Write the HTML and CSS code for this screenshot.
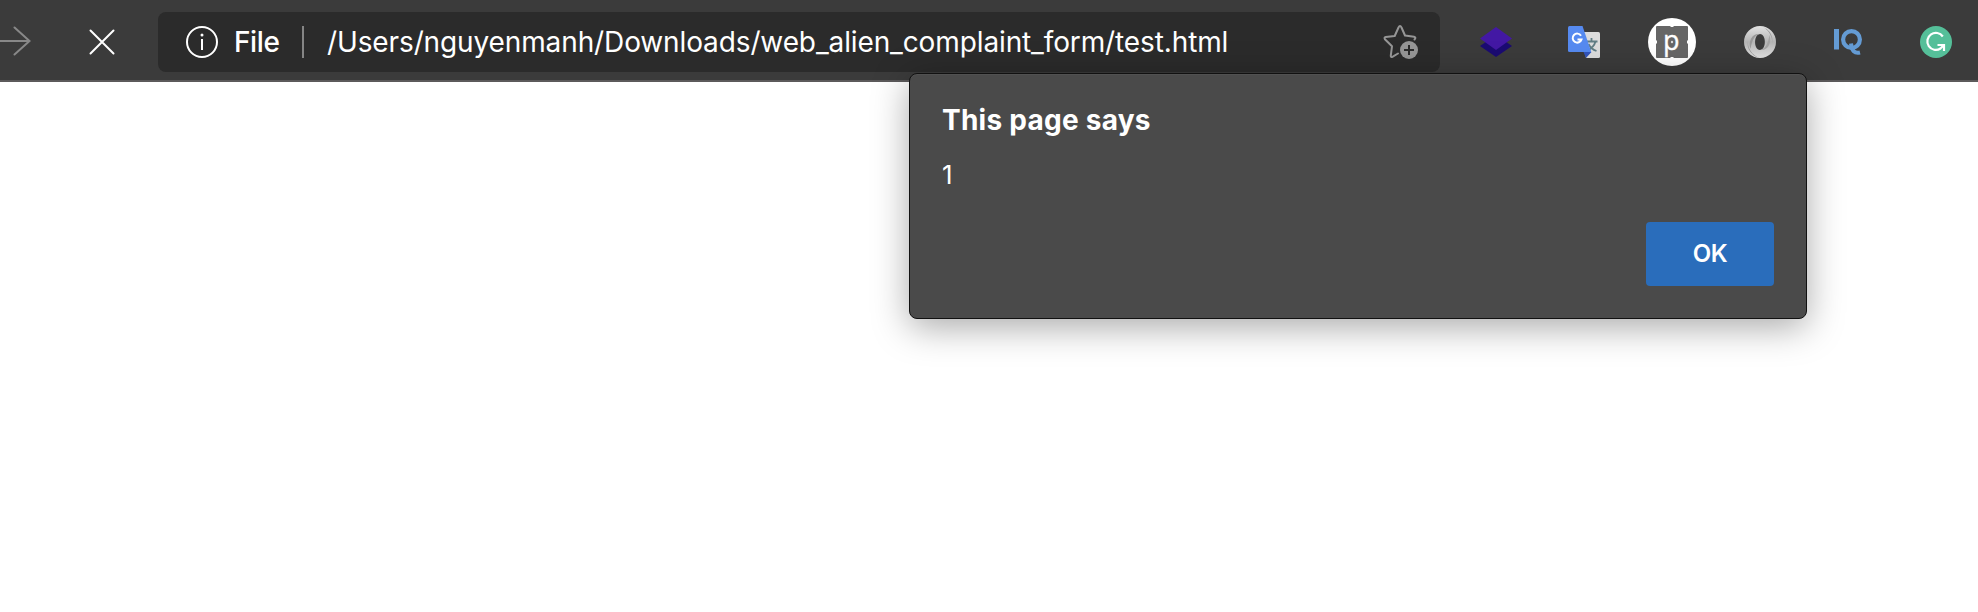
FILE: index.html
```html
<!DOCTYPE html>
<html lang="en">
<head>
<meta charset="utf-8">
<title>test.html</title>
<link rel="stylesheet" href="styles.css">
</head>
<body>
<header class="toolbar">
  <div class="nav">
    <svg class="forward" width="32" height="32" viewBox="0 0 32 32"><path d="M0 16H29.500M14.500 2.500 29.500 16 14.500 29.500"/></svg>
    <svg class="stop" width="26" height="26" viewBox="0 0 26 26"><path d="M1.500 1.500 24.500 24.500M24.500 1.500 1.500 24.500"/></svg>
  </div>
  <div class="address">
    <svg class="info" width="32" height="32" viewBox="0 0 32 32"><circle cx="16" cy="16" r="15" fill="none" stroke="#fff" stroke-width="2"/><path d="M16 13V24" stroke="#fff" stroke-width="2"/><circle cx="16" cy="9" r="1.500" fill="#fff"/></svg>
    <span class="scheme">File</span>
    <span class="divider"></span>
    <span class="url">/Users/nguyenmanh/Downloads/web_alien_complaint_form/test.html</span>
    <svg class="star" width="36" height="36" viewBox="0 0 36 36"><path d="M15 29.500 9.800 32.600Q7.600 33.800 7.800 31.500L9 22.300 1.900 15.200Q.900 13.300 2.700 13L11.700 12 15.500 3.500Q17 .600 18.500 3.500L22 11.500 31 12.700Q33.500 13.300 31.500 15.500" fill="none" stroke="#969696" stroke-width="2" stroke-linecap="round" stroke-linejoin="round"/><circle cx="26" cy="26" r="9" fill="#969696"/><path d="M26 21V31M21 26H31" stroke="#2b2b2b" stroke-width="2"/></svg>
  </div>
  <div class="extensions">
    <div class="ext"><svg width="32" height="32" viewBox="0 0 32 32"><path d="M0 20 16 9 32 20 16 31Z" fill="#1b0b72"/><path d="M0 12.500 16 1 32 12.500 16 24Z" fill="#4318a4"/></svg></div>
    <div class="ext"><svg width="32" height="32" viewBox="0 0 32 32"><path d="M14 6H30.500Q32 6 32 7.500V30.500Q32 32 30.500 32H18Z" fill="#dcdcdc"/><path d="M17.500 15.500H29.500M23.500 12V15.500M27.500 15.500Q26 21.500 18.500 25M20.500 18Q23 23 28.500 25" fill="none" stroke="#607d84" stroke-width="1.800"/><path d="M15.500 26H23.500L18 32Z" fill="#3154bb"/><path d="M1.500 0H14.500L23.300 26H1.500Q0 26 0 24.500V1.500Q0 0 1.500 0Z" fill="#568af0"/><path d="M13 9.700A4.500 4.500 0 1 0 13.500 13.400H9.500" fill="none" stroke="#fff" stroke-width="2"/></svg></div>
    <div class="ext"><svg width="48" height="48" viewBox="0 0 48 48"><circle cx="24" cy="24" r="24" fill="#fff"/><rect x="8" y="8" width="32" height="32" rx="1" fill="#666"/><path d="M22.500 8H25.500V9H22.500ZM22.500 39H25.500V40H22.500ZM8 22.500H9V25.500H8ZM39 22.500H40V25.500H39Z" fill="#fff"/><text class="p-letter" x="15" y="31.500">p</text><circle cx="24" cy="24" r="1.200" fill="#ddd"/></svg></div>
    <div class="ext"><svg width="32" height="32" viewBox="0 0 32 32"><defs><linearGradient id="base" x1="0" y1="0" x2="0" y2="1"><stop offset="0" stop-color="#e2e2e2"/><stop offset=".5" stop-color="#b5b5b5"/><stop offset="1" stop-color="#e2e2e2"/></linearGradient><linearGradient id="left" x1="0" y1="0" x2="0" y2="1"><stop offset="0" stop-color="#c8c8c8"/><stop offset="1" stop-color="#808080"/></linearGradient><linearGradient id="right" x1="0" y1="0" x2="0" y2="1"><stop offset="0" stop-color="#808080"/><stop offset="1" stop-color="#c8c8c8"/></linearGradient></defs><path d="M16 0A16 16 0 0 1 16 32A16 16 0 0 1 16 0ZM16 8C9.500 8 9.500 24 16 24C22.500 24 22.500 8 16 8Z" fill="url(#base)" fill-rule="evenodd"/><path d="M5 9C2 17 5 29 16 32A16 16 0 0 1 5 9Z" fill="url(#left)"/><path d="M27 23C30 15 27 3 16 0A16 16 0 0 1 27 23Z" fill="url(#right)"/><path d="M16 8C8 7 4 15 6.500 23C8 14 11 9 16 8Z" fill="#999"/><path d="M16 24C24 25 28 17 25.500 9C24 18 21 23 16 24Z" fill="#a5a5a5"/></svg></div>
    <div class="ext"><svg width="32" height="32" viewBox="0 0 32 32"><path d="M4.500 3V23.500" stroke="#649bd4" stroke-width="5"/><circle cx="19.500" cy="13.500" r="8.400" fill="none" stroke="#649bd4" stroke-width="4.200"/><path d="M19 17.500Q20 28.500 28 26.500" fill="none" stroke="#649bd4" stroke-width="4"/></svg></div>
    <div class="ext"><svg width="32" height="32" viewBox="0 0 32 32"><circle cx="16" cy="16" r="16" fill="#55bf99"/><path d="M22.800 10.500A8.500 8.500 0 1 0 20.500 22.500L23.500 19.500M17.500 19H24V25" fill="none" stroke="#fff" stroke-width="2.200"/></svg></div>
  </div>
</header>
<main class="dialog">
  <h1 class="title">This page says</h1>
  <p class="message">1</p>
  <button class="ok">OK</button>
</main>
</body>
</html>
```
FILE: styles.css
```css
* { box-sizing: border-box; }
body { margin: 0; height: 612px; overflow: hidden; background: #fff; font-family: Inter, "Liberation Sans", sans-serif; color: #fff; }
svg { display: block; flex: none; }
.toolbar { display: flex; height: 82px; padding-top: 12px; background: #3b3b3b; border-bottom: 2px solid #5c5a5b; }
.nav { display: flex; flex: none; width: 158px; height: 60px; align-items: center; gap: 57px; }
.forward { fill: none; stroke: #888; stroke-width: 2; stroke-linecap: round; margin-top: -2px; }
.stop { fill: none; stroke: #fff; stroke-width: 2; stroke-linecap: round; }
.address { display: flex; flex: none; align-items: center; width: 1282px; height: 60px; padding: 0 21px 0 28px; border-radius: 8px; background: #2b2b2b; font-size: 28px; line-height: 60px; white-space: nowrap; }
.scheme { width: 68px; margin-left: 16px; font-weight: 500; letter-spacing: -0.4px; }
.divider { width: 2px; height: 32px; background: #858585; }
.url { margin-left: 23px; letter-spacing: -0.12px; }
.star { margin-left: auto; }
.extensions { display: flex; flex: none; margin-left: 12px; }
.ext { display: flex; width: 88px; height: 60px; align-items: center; justify-content: center; }
.p-letter { font: 400 27px "Open Sans", sans-serif; fill: #fff; stroke: #fff; stroke-width: 0.4px; }
.dialog { position: absolute; left: 909px; top: 73px; width: 898px; height: 246px; padding: 28px 32px 32px; display: flex; flex-direction: column; border: 1px solid #111; border-radius: 8px; background: #4a4a4a; box-shadow: 0 8px 36px rgba(0,0,0,.34), inset 0 1px #515151; }
.title { margin: 0; font-size: 28px; line-height: 36px; font-weight: 700; letter-spacing: 0.25px; }
.message { margin: 19px 0 0; font-size: 26px; line-height: 36px; }
.ok { align-self: flex-end; margin-top: auto; width: 128px; height: 64px; padding: 0; border: 0; border-radius: 4px; background: #2a6dbb; color: #fff; font: 600 24px/64px Inter, sans-serif; letter-spacing: -0.5px; }
```
